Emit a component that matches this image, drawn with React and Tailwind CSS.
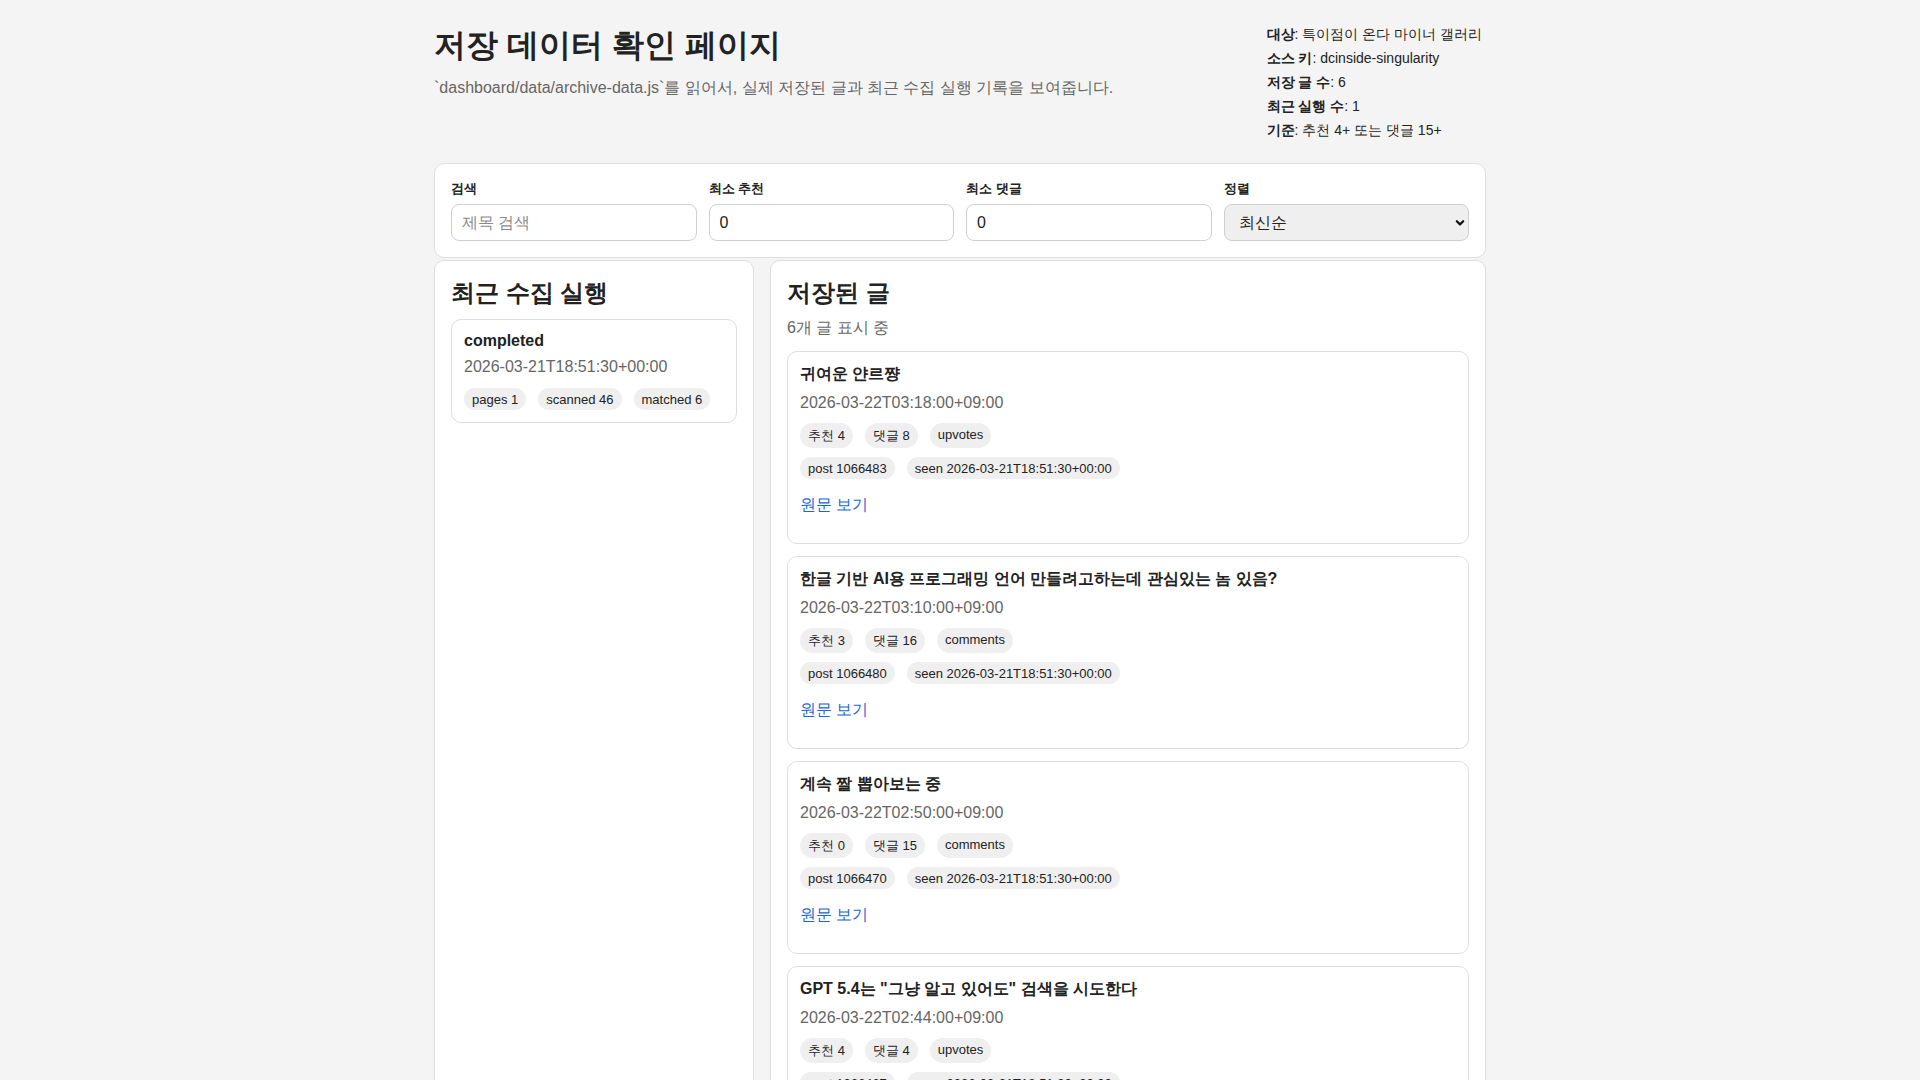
import { useState } from 'react';

const runs = [
  {
    status: 'completed',
    at: '2026-03-21T18:51:30+00:00',
    stats: ['pages 1', 'scanned 46', 'matched 6'],
  },
];

const posts = [
  { title: '귀여운 얀르쨩', date: '2026-03-22T03:18:00+09:00', up: 4, cm: 8, reason: 'upvotes', id: '1066483' },
  { title: '한글 기반 AI용 프로그래밍 언어 만들려고하는데 관심있는 놈 있음?', date: '2026-03-22T03:10:00+09:00', up: 3, cm: 16, reason: 'comments', id: '1066480' },
  { title: '계속 짤 뽑아보는 중', date: '2026-03-22T02:50:00+09:00', up: 0, cm: 15, reason: 'comments', id: '1066470' },
  { title: 'GPT 5.4는 "그냥 알고 있어도" 검색을 시도한다', date: '2026-03-22T02:44:00+09:00', up: 4, cm: 4, reason: 'upvotes', id: '1066467' },
  { title: '요즘 에이전트 성능 체감 어떰', date: '2026-03-22T02:21:00+09:00', up: 5, cm: 11, reason: 'upvotes', id: '1066459' },
  { title: '특이점 언제 오냐', date: '2026-03-22T01:58:00+09:00', up: 2, cm: 17, reason: 'comments', id: '1066451' },
];

const meta = [
  ['대상', '특이점이 온다 마이너 갤러리'],
  ['소스 키', 'dcinside-singularity'],
  ['저장 글 수', '6'],
  ['최근 실행 수', '1'],
  ['기준', '추천 4+ 또는 댓글 15+'],
];

const Pill = ({ children }) => (
  <span className="rounded-full bg-[#efefef] px-2 py-[3.5px] text-[13px] leading-[normal] text-[#222]">{children}</span>
);

// one filter column: label above the control
const Field = ({ label, children }) => (
  <label className="flex flex-col gap-1.5">
    <span className="text-[13px] font-bold leading-[18px]">{label}</span>
    {children}
  </label>
);

export default function App() {
  const [q, setQ] = useState('');
  const [minUp, setMinUp] = useState('0');
  const [minCm, setMinCm] = useState('0');

  return (
    <div lang="ko" className="min-h-screen bg-[#f4f4f4] font-['Liberation_Sans',sans-serif] leading-[normal] text-[#222]">
      <div className="mx-auto w-[1052px] pt-[22px]">
        {/* header */}
        <header className="flex items-start justify-between">
          <div className="mt-1">
            <h1 className="text-[32px] font-bold leading-[1.2]">저장 데이터 확인 페이지</h1>
            <p className="mt-3 text-base leading-6 text-[#666]">
              `dashboard/data/archive-data.js`를 읽어서, 실제 저장된 글과 최근 수집 실행 기록을 보여줍니다.
            </p>
          </div>
          <div className="mr-1 flex flex-col text-sm leading-6">
            {meta.map(([k, v]) => (
              <div key={k}>
                <b>{k}</b>: {v}
              </div>
            ))}
          </div>
        </header>

        {/* filters */}
        <section className="mt-[21px] grid grid-cols-4 gap-3 rounded-[10px] border border-[#dedede] bg-white p-4">
          <Field label="검색">
            <input
              value={q}
              onChange={(e) => setQ(e.target.value)}
              placeholder="제목 검색"
              className="h-[37px] rounded-lg border border-[#cfcfcf] bg-white px-2.5 text-base text-[#222] outline-none placeholder:text-[#8a8a8a]"
            />
          </Field>
          <Field label="최소 추천">
            <input
              value={minUp}
              onChange={(e) => setMinUp(e.target.value)}
              className="h-[37px] rounded-lg border border-[#cfcfcf] bg-white px-2.5 text-base text-[#222] outline-none"
            />
          </Field>
          <Field label="최소 댓글">
            <input
              value={minCm}
              onChange={(e) => setMinCm(e.target.value)}
              className="h-[37px] rounded-lg border border-[#cfcfcf] bg-white px-2.5 text-base text-[#222] outline-none"
            />
          </Field>
          <Field label="정렬">
            <div className="relative">
              <select className="h-[37px] w-full appearance-none rounded-lg border border-[#cfcfcf] bg-[#efefef] pl-[14px] text-base text-[#222] outline-none">
                <option>최신순</option>
                <option>추천순</option>
                <option>댓글순</option>
              </select>
              <svg className="pointer-events-none absolute right-[4px] top-[14px] h-[10px] w-[10px]" viewBox="0 0 10 10">
                <path d="M1.8 3.2 L5 6.4 L8.2 3.2" fill="none" stroke="#111" strokeWidth="2.2" strokeLinecap="round" strokeLinejoin="round" />
              </svg>
            </div>
          </Field>
        </section>

        {/* main */}
        <div className="mt-[2px] grid grid-cols-[320px_1fr] gap-4">
          <section className="rounded-[10px] border border-[#dedede] bg-white p-4">
            <h2 className="text-2xl font-bold leading-[normal]">최근 수집 실행</h2>
            <div className="mt-[10px] flex flex-col gap-3">
              {runs.map((r) => (
                <div key={r.at} className="rounded-[10px] border border-[#dedede] p-3">
                  <div className="font-bold">{r.status}</div>
                  <div className="mt-2 text-[#666]">{r.at}</div>
                  <div className="mt-3 flex gap-3">
                    {r.stats.map((s) => (
                      <Pill key={s}>{s}</Pill>
                    ))}
                  </div>
                </div>
              ))}
            </div>
          </section>

          <section className="rounded-[10px] border border-[#dedede] bg-white p-4">
            <h2 className="text-2xl font-bold leading-[normal]">저장된 글</h2>
            <p className="mt-[9px] text-[#666]">{posts.length}개 글 표시 중</p>
            <div className="mt-3 flex flex-col gap-3">
              {posts.map((p) => (
                <article key={p.id} className="rounded-[10px] border border-[#dedede] px-3 pb-[27px] pt-3">
                  <h3 className="font-bold">{p.title}</h3>
                  <div className="mt-[9px] text-[#666]">{p.date}</div>
                  <div className="mt-[11px] flex gap-3">
                    <Pill>추천 {p.up}</Pill>
                    <Pill>댓글 {p.cm}</Pill>
                    <Pill>{p.reason}</Pill>
                  </div>
                  <div className="mt-[9px] flex gap-3">
                    <Pill>post {p.id}</Pill>
                    <Pill>seen 2026-03-21T18:51:30+00:00</Pill>
                  </div>
                  <a href="#" className="mt-4 block text-[#1a66d9]">
                    원문 보기
                  </a>
                </article>
              ))}
            </div>
          </section>
        </div>
      </div>
    </div>
  );
}
